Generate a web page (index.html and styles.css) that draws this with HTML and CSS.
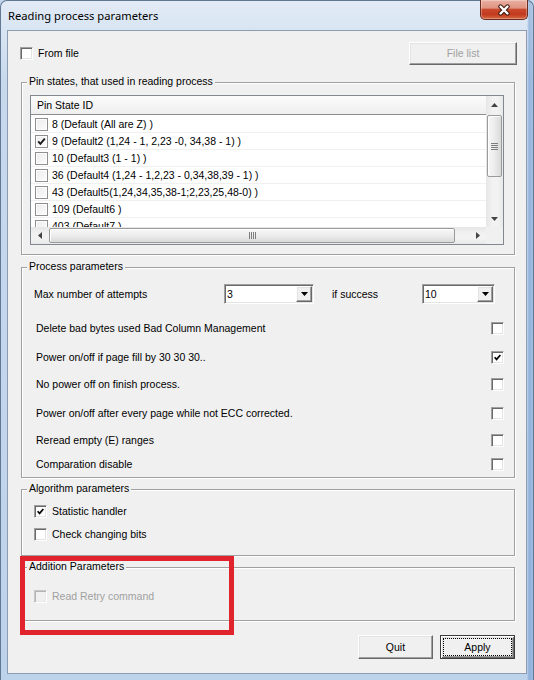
FILE: index.html
```html
<!DOCTYPE html>
<html lang="en">
<head>
    <meta charset="UTF-8">
    <meta name="viewport" content="width=device-width, initial-scale=1.0">
    <title>Reading process parameters</title>
    <link rel="stylesheet" href="styles.css">
</head>
<body>
    <div class="window">
        <div class="titlebar">
            <span class="title">Reading process parameters</span>
            <div class="close-btn">
                <svg width="14" height="12" viewBox="0 0 14 12">
                    <path d="M3.5 2.5 L10.5 9.5 M10.5 2.5 L3.5 9.5" stroke="#3e1a12" stroke-width="4.4" stroke-linecap="round" fill="none"/>
                    <path d="M3.5 2.5 L10.5 9.5 M10.5 2.5 L3.5 9.5" stroke="#fff" stroke-width="2.4" stroke-linecap="round" fill="none"/>
                </svg>
            </div>
        </div>

        <div class="client">
            <div class="top-row">
                <div class="check-item">
                    <span class="box"></span>
                    <span>From file</span>
                </div>
                <div class="btn raised btn-filelist disabled">File list</div>
            </div>

            <!-- pin states list -->
            <div class="group group-pins">
                <span class="group-title">Pin states, that used in reading process</span>
                <div class="listview">
                    <div class="lv-main">
                        <div class="lv-header">Pin State ID</div>
                        <div class="lv-rows">
                            <div class="lv-row"><span class="lv-box"></span>8 (Default (All are Z) )</div>
                            <div class="lv-row"><span class="lv-box checked"><svg width="9" height="9" viewBox="0 0 9 9"><path d="M1.2 4.4 L3.4 6.8 L7.8 1.6" stroke="#1a1a1a" stroke-width="1.9" fill="none"/></svg></span>9 (Default2 (1,24 - 1, 2,23 -0, 34,38 - 1) )</div>
                            <div class="lv-row"><span class="lv-box"></span>10 (Default3 (1 - 1) )</div>
                            <div class="lv-row"><span class="lv-box"></span>36 (Default4 (1,24 - 1,2,23 - 0,34,38,39 - 1) )</div>
                            <div class="lv-row"><span class="lv-box"></span>43 (Default5(1,24,34,35,38-1;2,23,25,48-0) )</div>
                            <div class="lv-row"><span class="lv-box"></span>109 (Default6 )</div>
                            <div class="lv-row"><span class="lv-box"></span>403 (Default7 )</div>
                        </div>
                    </div>
                    <div class="vscroll">
                        <div class="sb-btn">
                            <svg width="7" height="4" viewBox="0 0 7 4"><polygon points="0,4 3.5,0 7,4" fill="#444"/></svg>
                        </div>
                        <div class="vthumb">
                            <svg width="7" height="7" viewBox="0 0 7 7">
                                <path d="M0 0.5 H7 M0 2.5 H7 M0 4.5 H7 M0 6.5 H7" stroke="#7d7d7d" stroke-width="1"/>
                            </svg>
                        </div>
                        <div class="sb-track"></div>
                        <div class="sb-btn">
                            <svg width="7" height="4" viewBox="0 0 7 4"><polygon points="0,0 7,0 3.5,4" fill="#444"/></svg>
                        </div>
                    </div>
                    <div class="hscroll">
                        <div class="sb-btn">
                            <svg width="4" height="7" viewBox="0 0 4 7"><polygon points="4,0 4,7 0,3.5" fill="#444"/></svg>
                        </div>
                        <div class="hthumb">
                            <svg width="7" height="7" viewBox="0 0 7 7">
                                <path d="M0.5 0 V7 M2.5 0 V7 M4.5 0 V7 M6.5 0 V7" stroke="#7d7d7d" stroke-width="1"/>
                            </svg>
                        </div>
                        <div class="sb-track"></div>
                        <div class="sb-btn">
                            <svg width="4" height="7" viewBox="0 0 4 7"><polygon points="0,0 4,3.5 0,7" fill="#444"/></svg>
                        </div>
                    </div>
                    <div class="lv-corner"></div>
                </div>
            </div>

            <!-- process parameters -->
            <div class="group group-process">
                <span class="group-title">Process parameters</span>
                <div class="param-row">
                    <span class="attempts-label">Max number of attempts</span>
                    <div class="combo combo-attempts">
                        <span class="combo-value">3</span>
                        <span class="combo-btn raised">
                            <svg width="7" height="4" viewBox="0 0 7 4"><polygon points="0,0 7,0 3.5,4" fill="#000"/></svg>
                        </span>
                    </div>
                    <span class="success-label">if success</span>
                    <div class="combo combo-success">
                        <span class="combo-value">10</span>
                        <span class="combo-btn raised">
                            <svg width="7" height="4" viewBox="0 0 7 4"><polygon points="0,0 7,0 3.5,4" fill="#000"/></svg>
                        </span>
                    </div>
                </div>
                <div class="param-row check-row">
                    <span>Delete bad bytes used Bad Column Management</span>
                    <span class="box"></span>
                </div>
                <div class="param-row check-row">
                    <span>Power on/off if page fill by 30 30 30..</span>
                    <span class="box"><svg width="7" height="7" viewBox="0 0 7 7"><path d="M0.6 3.2 L2.6 5.4 L6.4 1" stroke="#000" stroke-width="1.7" fill="none"/></svg></span>
                </div>
                <div class="param-row check-row">
                    <span>No power off on finish process.</span>
                    <span class="box"></span>
                </div>
                <div class="param-row check-row">
                    <span>Power on/off after every page while not ECC corrected.</span>
                    <span class="box"></span>
                </div>
                <div class="param-row check-row">
                    <span>Reread empty (E) ranges</span>
                    <span class="box"></span>
                </div>
                <div class="param-row check-row">
                    <span>Comparation disable</span>
                    <span class="box"></span>
                </div>
            </div>

            <!-- algorithm parameters -->
            <div class="group group-algo">
                <span class="group-title">Algorithm parameters</span>
                <div class="check-item">
                    <span class="box"><svg width="7" height="7" viewBox="0 0 7 7"><path d="M0.6 3.2 L2.6 5.4 L6.4 1" stroke="#000" stroke-width="1.7" fill="none"/></svg></span>
                    <span>Statistic handler</span>
                </div>
                <div class="check-item">
                    <span class="box"></span>
                    <span>Check changing bits</span>
                </div>
            </div>

            <!-- addition parameters -->
            <div class="group group-addition">
                <span class="group-title">Addition Parameters</span>
                <div class="check-item disabled">
                    <span class="box"></span>
                    <span>Read Retry command</span>
                </div>
            </div>

            <div class="button-row">
                <div class="btn raised">Quit</div>
                <div class="btn raised btn-default"><span class="focus">Apply</span></div>
            </div>

            <div class="annotation"></div>
        </div>
    </div>
</body>
</html>
```

FILE: styles.css
```css
* {
    box-sizing: border-box;
}

body {
    margin: 0;
    width: 534px;
    height: 680px;
    overflow: hidden;
    font-family: "Liberation Sans", Arial, sans-serif;
    font-size: 10.5px;
    line-height: 13px;
    color: #000;
    background: #c4d7ed;
}

/* window frame */
.window {
    width: 534px;
    height: 680px;
    display: flex;
    flex-direction: column;
    padding: 0 6px 6px;
    border: 1px solid #627892;
    border-bottom: 0;
    border-radius: 7px 7px 0 0;
    background:
        linear-gradient(90deg, rgba(255,255,255,0) 526px, rgba(86,133,196,0.45) 528px, rgba(120,160,215,0.35) 534px),
        linear-gradient(180deg, #e2ebf6 0, #d9e5f3 28px, #c8d9ee 80px, #bdd2eb 100%);
}

.titlebar {
    height: 29px;
    display: flex;
    align-items: center;
    padding-left: 1px;
}

.title {
    font-family: "Noto Sans", "Open Sans", sans-serif;
    font-size: 11.2px;
    line-height: 14px;
}

.close-btn {
    margin-left: auto;
    align-self: flex-start;
    margin-top: -1px;
    margin-right: -1px;
    width: 48px;
    height: 20px;
    display: flex;
    align-items: center;
    justify-content: center;
    border: 1px solid #6b2a1e;
    border-top: 0;
    border-radius: 0 0 5px 5px;
    background: linear-gradient(180deg, #eab0a2 0%, #df9381 42%, #c9492d 50%, #c23a1f 75%, #d6683f 100%);
    box-shadow: inset 0 0 0 1px rgba(255,255,255,0.3);
}

.client {
    flex: 1;
    position: relative;
    display: flex;
    flex-direction: column;
    padding: 0 11px 0 13px;
    background: #f0f0f0;
    border: 1px solid #8c9db3;
}

/* common controls */
.raised {
    background: #f0f0f0;
    border: 1px solid;
    border-color: #fff #696969 #696969 #fff;
    box-shadow: inset -1px -1px #a0a0a0, inset 1px 1px #e3e3e3;
}

.btn {
    width: 75px;
    height: 24px;
    display: flex;
    align-items: center;
    justify-content: center;
}

.btn.disabled {
    color: #a0a0a0;
}

.btn-default {
    border: 1px solid #3c3c3c;
    box-shadow: inset 1px 1px #fff, inset -1px -1px #696969, inset 2px 2px #e3e3e3, inset -2px -2px #a0a0a0;
}

.btn-default .focus {
    width: 67px;
    height: 16px;
    display: flex;
    align-items: center;
    justify-content: center;
    outline: 1px dotted #000;
}

.box {
    width: 13px;
    height: 13px;
    flex: none;
    display: flex;
    align-items: center;
    justify-content: center;
    background: #fff;
    border: 1px solid;
    border-color: #a0a0a0 #fff #fff #a0a0a0;
    box-shadow: inset 1px 1px #696969, inset -1px -1px #e3e3e3;
}

.check-item {
    height: 13px;
    display: flex;
    align-items: center;
    gap: 5px;
}

.check-item.disabled {
    color: #a0a0a0;
}

.check-item.disabled .box {
    background: #f0f0f0;
    border-color: #c8c8c8 #fff #fff #c8c8c8;
    box-shadow: inset 1px 1px #b4b4b4, inset -1px -1px #e8e8e8;
}

.top-row {
    margin: 11px -2px 0 -1px;
    height: 23px;
    display: flex;
    align-items: center;
    justify-content: space-between;
}

.btn-filelist {
    width: 108px;
    height: 23px;
}

/* group boxes */
.group {
    position: relative;
    border: 1px solid #a0a0a0;
    box-shadow: inset 1px 1px #fff, 1px 1px #fff;
}

.group-title {
    position: absolute;
    top: -8px;
    left: 5px;
    padding: 0 2px;
    background: #f0f0f0;
    white-space: nowrap;
}

.group-pins {
    margin-top: 17px;
    padding: 12px 10px 9px 8px;
}

/* list view */
.listview {
    height: 150px;
    display: grid;
    grid-template-columns: 1fr 17px;
    grid-template-rows: 1fr 17px;
    border: 1px solid #828790;
    background: #fff;
}

.lv-main {
    overflow: hidden;
}

.lv-header {
    height: 19px;
    padding-left: 6px;
    line-height: 18px;
    background: linear-gradient(180deg, #fbfbfb, #efefef);
    border-bottom: 1px solid #8e8e8e;
}

.lv-rows {
    padding-top: 1px;
}

.lv-row {
    height: 17px;
    display: flex;
    align-items: center;
    gap: 4px;
    padding-left: 4px;
    white-space: nowrap;
    border-bottom: 1px solid #f0f0f0;
}

.lv-box {
    width: 13px;
    height: 13px;
    flex: none;
    display: flex;
    align-items: center;
    justify-content: center;
    border: 1px solid #8f8f8f;
    background: linear-gradient(135deg, #ececec, #fcfcfc);
    box-shadow: inset 0 0 0 1px #fff;
}

/* scroll bars */
.vscroll {
    display: flex;
    flex-direction: column;
    background: linear-gradient(90deg, #e6e6e6, #f2f2f2 40%, #f2f2f2 70%, #e8e8e8);
}

.hscroll {
    display: flex;
    background: linear-gradient(180deg, #e6e6e6, #f2f2f2 40%, #f2f2f2 70%, #e8e8e8);
}

.sb-btn {
    flex: 0 0 17px;
    display: flex;
    align-items: center;
    justify-content: center;
}

.sb-track {
    flex: 1;
}

.vthumb {
    margin: 2px 1px 0;
    height: 62px;
    display: flex;
    align-items: center;
    justify-content: center;
    border: 1px solid #9a9a9a;
    border-radius: 2px;
    background: linear-gradient(90deg, #f7f7f7, #ececec 50%, #d9d9d9);
    box-shadow: inset 1px 1px #fff;
}

.hthumb {
    margin: 1px 0 1px 1px;
    width: 406px;
    display: flex;
    align-items: center;
    justify-content: center;
    border: 1px solid #9a9a9a;
    border-radius: 2px;
    background: linear-gradient(180deg, #f7f7f7, #ececec 50%, #d9d9d9);
    box-shadow: inset 1px 1px #fff;
}

.lv-corner {
    background: #f0f0f0;
}

/* process parameters */
.group-process {
    margin-top: 12px;
    padding: 16px 10px 3px 12px;
    display: grid;
    grid-template-rows: 20px 34px 29px 27px 29px 27px 24px;
    align-items: end;
}

.param-row {
    height: 20px;
    display: flex;
    align-items: center;
    white-space: nowrap;
}

.check-row {
    justify-content: space-between;
    padding-left: 2px;
}

.attempts-label {
    width: 190px;
}

.success-label {
    width: 90px;
    margin-left: 18px;
}

.combo {
    height: 20px;
    display: flex;
    padding: 1px;
    background: #fff;
    border: 1px solid;
    border-color: #a0a0a0 #fff #fff #a0a0a0;
    box-shadow: inset 1px 1px #696969, inset -1px -1px #e3e3e3;
}

.combo-attempts {
    width: 90px;
}

.combo-success {
    width: 73px;
}

.combo-value {
    flex: 1;
    padding-left: 1px;
    line-height: 16px;
}

.combo-btn {
    width: 16px;
    display: flex;
    align-items: center;
    justify-content: center;
}

/* algorithm / addition */
.group-algo {
    margin-top: 11px;
    padding: 15px 10px 14px 12px;
    display: flex;
    flex-direction: column;
    gap: 10px;
}

.group-addition {
    margin-top: 11px;
    padding: 22px 10px 17px 12px;
}

.button-row {
    margin-top: 14px;
    display: flex;
    justify-content: flex-end;
    gap: 7px;
}

/* red highlight drawn over the screenshot */
.annotation {
    position: absolute;
    left: 12px;
    top: 525px;
    width: 214px;
    height: 79px;
    border: 5px solid #e0232c;
    pointer-events: none;
}
```
